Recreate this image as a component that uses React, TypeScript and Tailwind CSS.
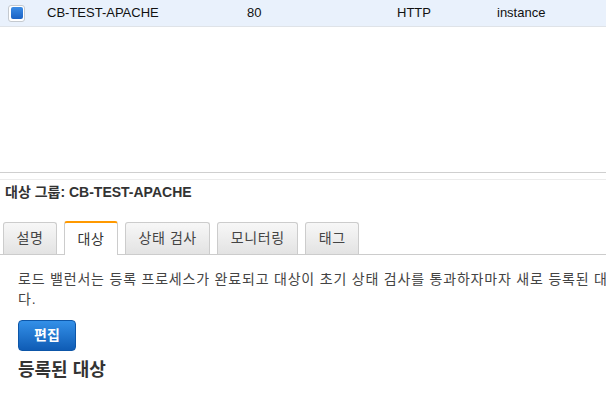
import React from 'react'

const tabs = [
  { label: '설명', active: false },
  { label: '대상', active: true },
  { label: '상태 검사', active: false },
  { label: '모니터링', active: false },
  { label: '태그', active: false },
]

const TargetRow = () => (
  <div className="flex h-[27px] items-center border-b border-[#dfe3e8] bg-[#e9f1fc] text-[13px] text-[#111]">
    <div className="ml-[8px] flex h-[17px] w-[17px] items-center justify-center rounded-[3px] border border-[#c4c9cf] bg-white">
      <div className="h-[12px] w-[12px] rounded-[2px] bg-gradient-to-b from-[#3b8ce6] to-[#1a62c4]"></div>
    </div>
    <span className="ml-[22px] w-[200px]">CB-TEST-APACHE</span>
    <span className="w-[150px]">80</span>
    <span className="w-[100px]">HTTP</span>
    <span>instance</span>
  </div>
)

const Tab = ({ label, active }) =>
  active ? (
    <div className="-mb-px flex h-[34px] items-center rounded-t-[3px] border-x border-t-2 border-x-[#ccc] border-t-[#f90] bg-white px-[12.5px] text-[14px] tracking-[0.6px] text-[#333]">
      {label}
    </div>
  ) : (
    <div className="flex h-[32px] items-center rounded-t-[3px] border-x border-t border-[#ccc] bg-gradient-to-b from-[#f7f7f7] to-[#e3e3e3] px-[12.5px] text-[14px] tracking-[0.6px] text-[#444]">
      {label}
    </div>
  )

export default function App() {
  return (
    <div className="h-[397px] w-[606px] overflow-hidden bg-white font-['Liberation_Sans','Noto_Sans_CJK_KR',sans-serif]">
      <TargetRow />
      <div className="h-[145px]"></div>
      <div className="h-[8px] border-y border-t-[#cfcfcf] border-b-[#ececec]"></div>

      <div className="px-[5px] pt-[2px] text-[14px] font-bold leading-[20px] text-[#333]">
        대상 그룹: CB-TEST-APACHE
      </div>

      <div className="mt-[19px] flex h-[34px] items-end gap-[7px] border-b border-[#ccc] pl-[3px]">
        {tabs.map((t) => (
          <Tab key={t.label} label={t.label} active={t.active} />
        ))}
      </div>

      <div className="px-[18px]">
        <p className="mt-[14px] text-[14px] leading-[20px] tracking-[0.8px] text-[#444]">
          <span className="block whitespace-nowrap">
            로드 밸런서는 등록 프로세스가 완료되고 대상이 초기 상태 검사를 통과하자마자 새로 등록된 대상으로 요청 라우팅을 시작합니
          </span>
          <span className="block">다.</span>
        </p>
        <button className="mt-[11px] h-[31px] w-[58px] rounded-[4px] border border-[#0d56a8] bg-gradient-to-b from-[#3390e8] to-[#0f5cb5] text-[14px] font-bold text-white">
          편집
        </button>
        <h2 className="mt-[7px] text-[18px] font-bold leading-[24px] text-[#333]">등록된 대상</h2>
      </div>
    </div>
  )
}
